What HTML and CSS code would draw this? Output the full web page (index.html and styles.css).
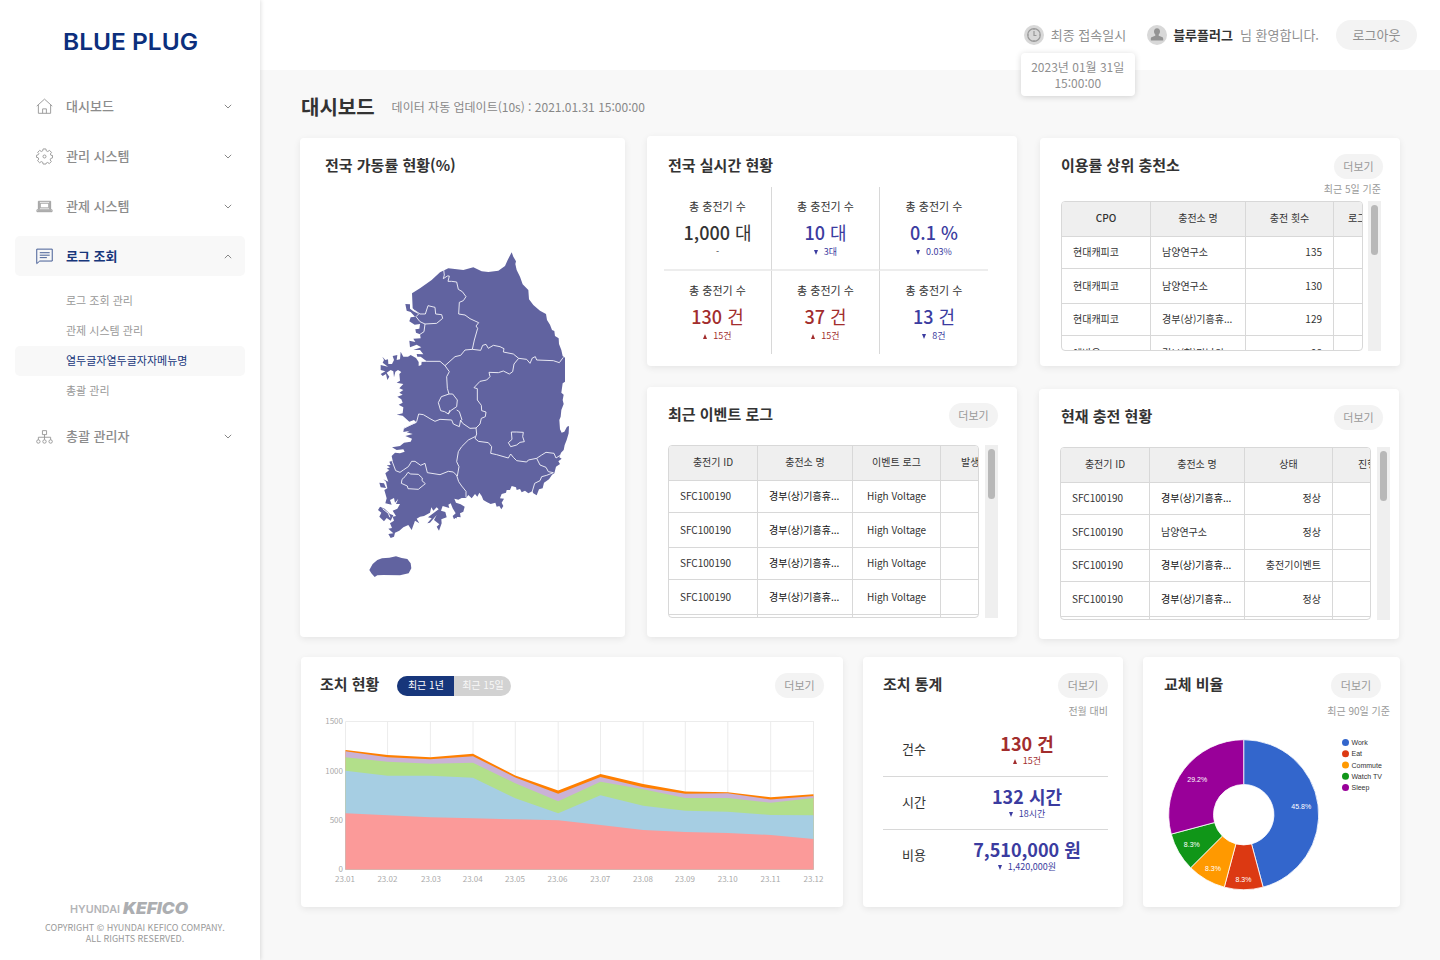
FILE: index.html
```html
<!DOCTYPE html>
<html lang="ko">
<head>
<meta charset="utf-8">
<title>BLUE PLUG 대시보드</title>
<link rel="stylesheet" href="styles.css">
</head>
<body>
<div class="app">
  <aside class="sidebar">
    <svg class="logo" width="136" height="24" viewBox="0 0 136 24"><text class="logo-text" x="0" y="20" textLength="135" lengthAdjust="spacingAndGlyphs">BLUE PLUG</text></svg>
    <nav class="nav">
      <a class="nav-item"><svg class="icon" viewBox="0 0 18 18"><path d="M.8 8.6 9 1.2l8.200 7.400M2.500 7.300v8.900h13V7.300M7 16.200v-4.700h4v4.700"/></svg><span>대시보드</span><svg class="chev" viewBox="0 0 8 5"><path d="M.8.8 4 4 7.200.8"/></svg></a>
      <a class="nav-item"><svg class="icon" viewBox="0 0 18 18"><path d="M7.500 1h3l.4 2 1.600.7 1.800-1.200 2.100 2.100-1.200 1.800.6 1.300 1.700.2v2.600l-1.900.6-.6 1.500 1.200 1.800-2.100 2.100-1.800-1.200-1.500.7L10.500 17h-3l-.4-1.900-1.500-.7-1.800 1.200-2.100-2.100 1.200-1.800-.7-1.500L.5 9.900V7.700L2.300 7.200 3 5.900 1.800 4.600l2.100-2.100 1.700 1.200 1.500-.7z"/><circle cx="9" cy="9" r="1.600"/></svg><span>관리 시스템</span><svg class="chev" viewBox="0 0 8 5"><path d="M.8.8 4 4 7.200.8"/></svg></a>
      <a class="nav-item"><svg class="icon" viewBox="0 0 18 18"><path d="M2.500 12V3.500h13V12M4.500 11V5.500h9V11M5 10.500h8M1 12.500h16v2H1zM2 13.500h14M3.500 4v8m11-8v8"/></svg><span>관제 시스템</span><svg class="chev" viewBox="0 0 8 5"><path d="M.8.8 4 4 7.200.8"/></svg></a>
      <a class="nav-item active"><svg class="icon" viewBox="0 0 18 18"><path d="M.8 16.500V1.200h16.400v12.600H4zM4 5h10.500M4 7.600h10.500M4 10.200h7.500"/></svg><span>로그 조회</span><svg class="chev" viewBox="0 0 8 5"><path d="M.8 4.200 4 1l3.200 3.200"/></svg></a>
      <div class="subnav">
        <a>로그 조회 관리</a><a>관제 시스템 관리</a><a class="current">열두글자열두글자자메뉴명</a><a>총괄 관리</a>
      </div>
      <a class="nav-item"><svg class="icon" viewBox="0 0 18 18"><path d="M6.800 2.800h4.400V7H6.800zM9 7v5.500M2.500 12.500V9.800h13v2.700"/><circle cx="2.500" cy="14.300" r="1.800"/><circle cx="9" cy="14.300" r="1.800"/><circle cx="15.500" cy="14.300" r="1.800"/></svg><span>총괄 관리자</span><svg class="chev" viewBox="0 0 8 5"><path d="M.8.8 4 4 7.200.8"/></svg></a>
    </nav>
    <footer class="foot">
      <svg class="foot-logo" width="120" height="14" viewBox="0 0 120 14"><text class="hyundai" x="0" y="11.500" textLength="50" lengthAdjust="spacingAndGlyphs">HYUNDAI</text><text class="kefico" x="53" y="12.700" textLength="65" lengthAdjust="spacingAndGlyphs">KEFICO</text></svg>
      <p>COPYRIGHT © HYUNDAI KEFICO COMPANY.<br>ALL RIGHTS RESERVED.</p>
    </footer>
  </aside>
  <div class="content">
    <header class="topbar">
      <div class="last-login">
        <svg class="badge" viewBox="0 0 20 20"><circle class="disc" cx="10" cy="10" r="10"/><circle class="ring" cx="10" cy="10" r="6.300"/><path class="ring" d="M10 6v4.500h2.500M10 4v1m0 10v1m-6-6h1m10 0h1"/></svg>
        <span>최종 접속일시</span>
        <div class="tooltip">2023년 01월 31일<br>15:00:00</div>
      </div>
      <div class="user">
        <svg class="badge" viewBox="0 0 20 20"><circle class="disc" cx="10" cy="10" r="10"/><path class="person" d="M10 3.300c2 0 3 1.300 3 3.200 0 1.500-.7 2.400-1.300 3.100v1.200l3.300 1.100c.9.300 1.200 1 1.200 2v1.500H3.800v-1.500c0-1 .3-1.700 1.200-2l3.300-1.100V9.600C7.700 8.900 7 8 7 6.500c0-1.900 1-3.200 3-3.200z"/></svg>
        <b>블루플러그</b><span>님 환영합니다.</span>
      </div>
      <button class="logout">로그아웃</button>
    </header>
    <div class="heading"><h1>대시보드</h1><span>데이터 자동 업데이트(10s) : 2021.01.31 15:00:00</span></div>
    <main>
      <div class="upper">
        <section class="card map-card">
          <h2>전국 가동률 현황(%)</h2>
          <svg class="map" width="250" height="350" viewBox="0 0 750 1050">
            <path class="land" d="M515 37 520 50 528 64 526 72 530 90 540 110 548 133 565 150 567 178 580 195 600 212 618 222 621 240 630 254 636 270 643 273 645 288 656 295 657 312 664 330 668 348 675 353 675 425 668 430 664 458 671 464 668 480 671 492 664 510 662 530 658 540 660 568 665 578 673 575 681 560 687 558 686 580 680 600 674 615 671 630 663 638 658 652 665 656 655 664 660 672 648 680 643 700 636 704 627 718 612 728 608 745 597 748 590 766 580 760 577 754 565 760 555 752 545 757 540 747 530 750 528 742 515 738 510 750 500 750 498 758 485 762 480 775 492 776 485 788 490 798 484 808 478 798 470 800 466 788 452 792 440 786 430 780 425 768 418 758 412 770 405 762 395 775 385 765 378 774 365 774 355 779 343 776 348 788 362 793 374 800 370 815 360 820 362 832 350 830 342 838 338 828 347 820 338 805 332 790 325 794 328 804 308 798 303 812 316 816 320 832 304 838 305 850 297 872 290 860 298 853 282 840 290 825 270 848 262 850 275 835 264 832 280 820 296 808 290 802 280 812 274 802 270 818 252 828 240 830 230 836 238 850 225 842 215 870 205 855 190 862 178 872 165 878 162 890 152 894 145 882 160 880 145 866 156 864 150 850 162 842 158 830 168 828 158 812 172 806 180 792 168 792 175 776 165 788 162 774 150 780 155 794 136 790 140 775 133 750 142 745 138 725 130 718 145 725 136 700 148 690 140 686 150 682 140 676 152 675 148 665 158 662 155 648 165 638 180 640 194 635 190 628 170 630 156 622 180 618 192 608 212 605 216 596 196 588 218 582 200 577 210 572 190 576 192 564 230 548 222 540 208 545 188 527 170 524 188 520 190 502 176 494 188 488 184 478 172 470 188 464 178 458 190 450 178 445 190 432 170 428 180 422 178 402 184 396 174 390 166 395 162 412 160 394 152 390 140 398 148 410 142 420 138 402 128 408 122 402 136 394 122 390 122 375 144 380 128 368 132 360 127 350 136 360 144 358 145 372 156 372 162 360 158 348 172 345 170 360 180 358 182 335 190 350 204 350 212 345 228 354 236 366 236 378 244 375 245 365 260 364 242 350 232 350 230 342 250 343 240 330 220 330 244 322 230 314 210 322 208 302 226 306 220 296 242 295 240 283 228 278 226 268 238 266 240 252 224 254 208 244 212 232 225 230 212 216 200 212 196 192 210 193 210 206 220 214 236 222 218 205 216 160 240 145 275 120 300 97 325 85 370 90 400 82 425 94 445 96 475 92 495 78 503 60ZM118 728 132 730 138 744 122 742ZM120 800 134 806 150 822 160 826 152 842 140 834 132 844 118 830 124 818 114 810ZM342 824 352 818 350 836Z"/>
            <path class="land" d="M88 990 98 972 112 960 126 955 148 953 168 949 185 954 202 957 212 970 214 985 206 1000 180 1006 130 1005 112 1006 104 1011 94 1000Z"/>
            <path class="water" d="M128 806 145 820 150 832M143 808 158 822"/>
            <path class="border" d="M311 89 313 105 310 116 322 108 328 108 324 124 335 124 350 126 355 148 367 155 378 170 370 182 358 187 356 222 375 225 390 236 416 248 408 258 413 265 403 300 397 328 M236 222 228 230 240 245 255 252 290 250 308 235 305 224 287 222 285 202 264 197 256 222 240 222 225 212M255 252 252 275 240 283M241 364 260 364 300 364 315 377 345 350 362 346 375 330 397 328 422 331 428 316 438 313 445 325 460 316 480 320 492 326 490 336 520 342 536 355 560 358 570 370 577 354 586 350 590 360 640 362 658 368 670 352M536 355 522 372 518 395 508 402 490 393 475 398 447 397 450 410 440 420 420 424 402 443 412 446 412 480 424 496 425 512 438 516 436 530 424 535 420 552 408 564 410 582 405 595 415 604 445 608 455 620 452 640 470 644 505 654 512 642 520 652 530 662 560 666 565 660 590 655 605 645 618 637 642 640 648 654 662 645M590 655 600 675 618 682 625 695 640 698M640 698 620 706 605 710 600 722 584 730 576 757M405 590 385 600 365 620 355 635 350 665 357 680 352 708 340 696 325 694 300 704 262 698 255 670 242 676 225 664 215 664 205 680 190 690 180 697 167 692 155 660M350 706 356 725 365 738 378 754 378 772M408 564 390 565 368 550 362 540 358 560 340 552 335 540 300 538 285 544 270 536 250 524 236 522 230 545 190 566M315 377 328 395 320 410 322 445 327 462 304 470 295 488 302 512 314 515 325 522 332 512 350 500 352 480 338 462 327 462M325 522 330 510M350 510 358 515 366 540M514 576 530 576 550 577 548 590 553 605 540 607 530 615 512 620 505 608 516 598ZM204 697 212 702 235 703 247 714 246 722 256 731 235 748 204 746 202 738 184 730 186 718 195 710Z"/>
          </svg>
        </section>
        <div class="col mid">
          <section class="card live">
            <h2>전국 실시간 현황</h2>
            <div class="stats">
              <div class="stat"><label>총 충전기 수</label><strong>1,000 <i>대</i></strong><small>-</small></div>
              <div class="stat down"><label>총 충전기 수</label><strong>10 <i>대</i></strong><small><em></em>3대</small></div>
              <div class="stat down"><label>총 충전기 수</label><strong>0.1 %</strong><small><em></em>0.03%</small></div>
              <div class="stat up"><label>총 충전기 수</label><strong>130 <i>건</i></strong><small><em></em>15건</small></div>
              <div class="stat up"><label>총 충전기 수</label><strong>37 <i>건</i></strong><small><em></em>15건</small></div>
              <div class="stat down"><label>총 충전기 수</label><strong>13 <i>건</i></strong><small><em></em>8건</small></div>
            </div>
          </section>
          <section class="card events">
            <div class="card-head"><h2>최근 이벤트 로그</h2><button class="more">더보기</button></div>
            <div class="table-area">
              <div class="table">
                <div class="tr th"><span>충전기 ID</span><span>충전소 명</span><span>이벤트 로그</span><span class="cut">발생일시</span></div>
                <div class="tr"><span>SFC100190</span><span class="dark">경부(상)기흥휴...</span><span class="ctr">High Voltage</span><span></span></div>
                <div class="tr tall"><span>SFC100190</span><span class="dark">경부(상)기흥휴...</span><span class="ctr">High Voltage</span><span></span></div>
                <div class="tr"><span>SFC100190</span><span class="dark">경부(상)기흥휴...</span><span class="ctr">High Voltage</span><span></span></div>
                <div class="tr tall"><span>SFC100190</span><span class="dark">경부(상)기흥휴...</span><span class="ctr">High Voltage</span><span></span></div>
                <div class="tr"><span></span><span></span><span></span><span></span></div>
              </div>
              <div class="scroll"><i></i></div>
            </div>
          </section>
        </div>
        <div class="col right">
          <section class="card usage">
            <div class="card-head"><h2>이용률 상위 충천소</h2><button class="more">더보기</button></div>
            <p class="note">최근 5일 기준</p>
            <div class="table-area">
              <div class="table">
                <div class="tr th"><span class="med">CPO</span><span>충전소 명</span><span>충전 횟수</span><span class="cut">로그인</span></div>
                <div class="tr"><span>현대캐피코</span><span>남양연구소</span><span class="num">135</span><span></span></div>
                <div class="tr tall"><span>현대캐피코</span><span>남양연구소</span><span class="num">130</span><span></span></div>
                <div class="tr"><span>현대캐피코</span><span>경부(상)기흥휴...</span><span class="num">129</span><span></span></div>
                <div class="tr tall"><span>에바온</span><span>경부(하)망남의...</span><span class="num">98</span><span></span></div>
              </div>
              <div class="scroll"><i></i></div>
            </div>
          </section>
          <section class="card charging">
            <div class="card-head"><h2>현재 충전 현황</h2><button class="more">더보기</button></div>
            <div class="table-area">
              <div class="table">
                <div class="tr th"><span>충전기 ID</span><span>충전소 명</span><span>상태</span><span class="cut">진행률</span></div>
                <div class="tr"><span>SFC100190</span><span class="dark">경부(상)기흥휴...</span><span class="num">정상</span><span></span></div>
                <div class="tr tall"><span>SFC100190</span><span>남양연구소</span><span class="num">정상</span><span></span></div>
                <div class="tr"><span>SFC100190</span><span class="dark">경부(상)기흥휴...</span><span class="num">충전기이벤트</span><span></span></div>
                <div class="tr tall"><span>SFC100190</span><span class="dark">경부(상)기흥휴...</span><span class="num">정상</span><span></span></div>
                <div class="tr"><span></span><span></span><span></span><span></span></div>
              </div>
              <div class="scroll"><i></i></div>
            </div>
          </section>
        </div>
      </div>
      <div class="lower">
        <section class="card action">
          <div class="card-head"><h2>조치 현황</h2><div class="toggle"><span class="on">최근 1년</span><span>최근 15일</span></div><button class="more">더보기</button></div>
          <svg class="chart" width="542" height="190" viewBox="301 707 542 190">
            <path class="grid" d="M345.500 721.500H814M345.500 771H814M345.500 820H814M345.500 721.500V869.500M387.600 721.500V869.500M430.400 721.500V869.500M473 721.500V869.500M515.300 721.500V869.500M558.200 721.500V869.500M600.500 721.500V869.500M643.200 721.500V869.500M685.300 721.500V869.500M727.800 721.500V869.500M770.700 721.500V869.500M813.500 721.500V869.500"/>
            <path fill="#ff7f00" d="M345.500 750 387.600 755 430.400 757.300 473 753.800 515.300 775.500 558.200 790.500 600.500 774 643.200 784 685.300 791.500 727.800 792.300 770.700 797.300 813.500 794.300V869.500H345.500Z"/>
            <path fill="#cab2d6" d="M345.500 751.300 387.600 757.200 430.400 759.200 473 756.200 515.300 777.500 558.200 793.700 600.500 777 643.200 787.300 685.300 793.700 727.800 793.300 770.700 799.500 813.500 796V869.500H345.500Z"/>
            <path fill="#b2df8a" d="M345.500 757.300 387.600 761.700 430.400 763.700 473 762.700 515.300 783.300 558.200 801.300 600.500 781.700 643.200 789.300 685.300 798 727.800 798 770.700 802.700 813.500 798V869.500H345.500Z"/>
            <path fill="#a6cee3" d="M345.500 770.700 387.600 775.700 430.400 775.700 473 777.700 515.300 798.300 558.200 813.300 600.500 795.300 643.200 805.700 685.300 810.700 727.800 811.700 770.700 815 813.500 815.300V869.500H345.500Z"/>
            <path fill="#fb9a99" d="M345.500 813.300 387.600 815.300 430.400 817.300 473 818.300 515.300 819.300 558.200 820.300 600.500 825 643.200 830 685.300 832 727.800 833 770.700 835 813.500 839V869.500H345.500Z"/>
            <g class="ylab"><text x="343" y="724">1500</text><text x="343" y="773.500">1000</text><text x="343" y="822.500">500</text><text x="343" y="872">0</text></g>
            <g class="xlab"><text x="345" y="882">23.01</text><text x="387.400" y="882">23.02</text><text x="431" y="882">23.03</text><text x="472.700" y="882">23.04</text><text x="515" y="882">23.05</text><text x="557.500" y="882">23.06</text><text x="600.300" y="882">23.07</text><text x="643" y="882">23.08</text><text x="685" y="882">23.09</text><text x="727.700" y="882">23.10</text><text x="770.500" y="882">23.11</text><text x="813.500" y="882">23.12</text></g>
          </svg>
        </section>
        <section class="card totals">
          <div class="card-head"><h2>조치 통계</h2><button class="more">더보기</button></div>
          <p class="note">전월 대비</p>
          <div class="total up"><span>건수</span><div><strong>130 건</strong><small><em></em>15건</small></div></div>
          <div class="total down"><span>시간</span><div><strong>132 시간</strong><small><em></em>18시간</small></div></div>
          <div class="total down"><span>비용</span><div><strong>7,510,000 원</strong><small><em></em>1,420,000원</small></div></div>
        </section>
        <section class="card ratio">
          <div class="card-head"><h2>교체 비율</h2><button class="more">더보기</button></div>
          <p class="note">최근 90일 기준</p>
          <svg class="donut" width="257" height="170" viewBox="1143 727 257 170">
            <g stroke="#fff" stroke-width=".8">
            <path fill="#3366cc" d="M1243.700 739.700A75 75 0 0 1 1263.110 887.140L1251.520 843.880A30.200 30.200 0 0 0 1243.700 784.500Z"/>
            <path fill="#dc3912" d="M1263.110 887.140A75 75 0 0 1 1224.290 887.140L1235.880 843.880A30.200 30.200 0 0 0 1251.520 843.880Z"/>
            <path fill="#ff9900" d="M1224.290 887.140A75 75 0 0 1 1190.670 867.730L1222.350 836.050A30.200 30.200 0 0 0 1235.880 843.880Z"/>
            <path fill="#109618" d="M1190.670 867.730A75 75 0 0 1 1171.260 834.110L1214.530 822.520A30.200 30.200 0 0 0 1222.350 836.050Z"/>
            <path fill="#990099" d="M1171.260 834.110A75 75 0 0 1 1243.700 739.700L1243.700 784.500A30.200 30.200 0 0 0 1214.530 822.520Z"/>
            </g>
            <g class="pct"><text x="1301.200" y="809.300">45.8%</text><text x="1197.200" y="781.600">29.2%</text><text x="1191.800" y="847">8.3%</text><text x="1213" y="870.500">8.3%</text><text x="1243.500" y="881.800">8.3%</text></g>
            <circle cx="1345.500" cy="742.500" r="3.500" fill="#3366cc"/><circle cx="1345.500" cy="753.800" r="3.500" fill="#dc3912"/><circle cx="1345.500" cy="765" r="3.500" fill="#ff9900"/><circle cx="1345.500" cy="776.200" r="3.500" fill="#109618"/><circle cx="1345.500" cy="787.500" r="3.500" fill="#990099"/>
            <g class="legend"><text x="1351.500" y="745">Work</text><text x="1351.500" y="756.200">Eat</text><text x="1351.500" y="767.500">Commute</text><text x="1351.500" y="778.700">Watch TV</text><text x="1351.500" y="790">Sleep</text></g>
          </svg>
        </section>
      </div>
    </main>
  </div>
</div>
</body>
</html>
```
FILE: styles.css
```css
* { box-sizing: border-box; }
body { margin: 0; font-family: "Noto Sans CJK KR", sans-serif; background: #f8f8f8; color: #333; }
h1, h2, p { margin: 0; }
button { border: 0; padding: 0; font-family: inherit; cursor: pointer; }
.app { display: flex; width: 1440px; height: 960px; overflow: hidden; }

/* Sidebar */
.sidebar { position: relative; z-index: 1; width: 260px; flex: none; display: flex; flex-direction: column; background: #fff; box-shadow: 1px 0 4px rgba(0,0,0,.12); }
.logo { margin: 30px 0 0 63px; display: block; }
.logo-text { font: 600 23px Inter, sans-serif; fill: #0c2f7d; }
.nav { margin-top: 32px; padding: 0 15px; display: flex; flex-direction: column; gap: 10px; }
.nav-item { display: flex; align-items: center; height: 40px; padding: 0 13px 0 21px; border-radius: 5px; font-size: 13px; font-weight: 500; line-height: 40px; color: #8c8c8c; }
.nav-item span { flex: 1; margin-left: 13px; }
.icon { width: 17px; height: 17px; fill: none; stroke: #999; stroke-width: 1; }
.chev { width: 8px; height: 5px; fill: none; stroke: #888; stroke-width: 1; }
.active { background: #f8f8f8; color: #17367b; font-weight: 700; }
.active .icon { stroke: #3b5590; }
.subnav { display: flex; flex-direction: column; }
.subnav a { height: 30px; padding-left: 51px; border-radius: 5px; font-size: 11px; line-height: 29px; color: #999; }
.subnav .current { background: #f8f8f8; color: #17367b; }
.foot { margin-top: auto; padding: 0 0 16px 10px; text-align: center; font-size: 9px; line-height: 11px; color: #999; }
.foot-logo { display: block; margin: 0 auto 7px 60px; }
.hyundai { font: 600 11px Inter, sans-serif; fill: #b3b4b7; }
.kefico { font: italic 900 16px Inter, sans-serif; fill: #acaeb1; }

/* Top bar */
.content { flex: 1; }
.topbar { height: 70px; padding: 0 23px; display: flex; align-items: center; justify-content: flex-end; background: #fff; font-size: 13px; line-height: 20px; color: #8f8f8f; }
.last-login { position: relative; display: flex; align-items: center; gap: 7px; margin-right: 21px; }
.badge { width: 20px; height: 20px; }
.disc { fill: #d8d8d8; }
.ring { fill: none; stroke: #999; stroke-width: 1.2; }
.person { fill: #939393; }
.tooltip { position: absolute; left: -3px; top: 28px; width: 114px; height: 43px; padding-top: 6px; border-radius: 4px; background: #fff; box-shadow: 0 1px 6px rgba(0,0,0,.16); text-align: center; font-size: 12px; line-height: 15.500px; white-space: nowrap; }
.user { display: flex; align-items: center; }
.user b { margin: 0 7px 0 6px; color: #333; }
.logout { width: 81px; height: 30px; margin-left: 17px; border-radius: 15px; background: #f3f3f3; font-size: 13px; line-height: 28px; color: #8f8f8f; }
.heading { display: flex; align-items: center; gap: 17px; height: 30px; margin: 22px 0 0 41px; }
h1 { font-size: 20px; line-height: 30px; }
.heading span { font-size: 12px; line-height: 30px; color: #888; }

/* Cards */
main { padding: 14px 40px 0; }
.upper { display: flex; align-items: flex-start; height: 521px; }
.lower { display: flex; gap: 20px; padding-left: 1px; }
.card { background: #fff; border-radius: 4px; box-shadow: 0 2px 7px rgba(0,0,0,.08); }
h2 { font-size: 15px; line-height: 22px; font-weight: 700; white-space: nowrap; }
.card-head { display: flex; align-items: flex-start; height: 25px; }
.card-head h2 { flex: 1; }
.more { width: 49px; height: 25px; border-radius: 13px; background: #f3f3f3; font-size: 11px; line-height: 23px; color: #999; }
.note { text-align: right; font-size: 10px; line-height: 14px; color: #999; }
.map-card { width: 325px; height: 499px; margin-top: 2px; padding: 16px 25px; }
.map { display: block; margin: 64px 0 0 15px; }
.land { fill: #6163a0; }
.border { fill: none; stroke: #f0f0f8; stroke-width: 2.800; stroke-linejoin: round; }
.water { fill: none; stroke: #fff; stroke-width: 3; }
.col { display: flex; flex-direction: column; }
.mid { width: 370px; margin-left: 22px; gap: 21px; }
.right { width: 361px; margin: 2px 0 0 22px; gap: 23px; }
.live { height: 230px; padding: 18px 0 0 17px; }
.live h2 { margin-left: 4px; }
.stats { display: grid; grid-template-columns: repeat(3, 108px); grid-template-rows: 84px 83px; margin-top: 11px; }
.stat { display: flex; flex-direction: column; align-items: center; border-right: 1px solid #d8d8d8; }
.stat:nth-child(3n) { border-right: 0; }
.stat:nth-child(-n+3) { border-bottom: 2px solid #ededed; }
.stat label { margin-top: 11px; font-size: 11px; line-height: 16px; }
.stat strong { margin-top: 5px; font-size: 18px; line-height: 26px; font-weight: 500; }
.stat i { font-style: normal; font-weight: 400; }
small { display: flex; align-items: center; gap: 5px; font-size: 9px; line-height: 14px; }
.up strong, .up small { color: #a22d2d; }
.down strong, .down small { color: #3b3ca0; }
em { width: 0; height: 0; border: 2.500px solid transparent; margin-right: 1px; }
.up em { border-top: 0; border-bottom: 5px solid #a22d2d; }
.down em { border-bottom: 0; border-top: 5px solid #3b3ca0; }
.events { height: 250px; padding: 16px 19px 0 21px; }
.usage { width: 360px; height: 228px; margin-left: 1px; padding: 16px 17px 0 21px; }
.usage .note { margin: 3px 2px 5px 0; }
.charging { width: 360px; height: 250px; padding: 16px 9px 0 21px; }
.charging .more { margin-right: 7px; }
.charging h2 { margin-left: 1px; }

/* Tables */
.table-area { display: flex; justify-content: space-between; height: 173px; }
.events .table-area, .charging .table-area { margin-top: 17px; }
.usage .table-area { height: 150px; padding-right: 2px; }
.table { width: 311px; border: 1px solid #d8d8d8; border-radius: 4px; overflow: hidden; font-size: 10px; }
.usage .table { width: 302px; }
.tr { display: grid; grid-template-columns: 89px 95px 88px 90px; height: 32px; line-height: 30px; border-bottom: 1px solid #d8d8d8; }
.tall { height: 35px; line-height: 33px; }
.th { height: 35px; line-height: 31px; background: #efefef; text-align: center; }
.tr span { padding: 0 11px; border-right: 1px solid #d8d8d8; white-space: nowrap; }
.tr .num { text-align: right; }
.tr .ctr { text-align: center; }
.tr .dark { color: #111; }
.tr .med { font-weight: 500; }
.tr .cut { text-align: left; padding-left: 14px; }
.events .cut { padding-left: 20px; }
.charging .cut { padding-left: 25px; }
.scroll { width: 13px; padding: 4px 3px; background: #efefef; }
.scroll i { display: block; width: 7px; height: 50px; border-radius: 4px; background: #b8b8b8; }

/* Lower cards */
.action { width: 542px; height: 250px; }
.action .card-head { padding: 16px 19px 0 19px; height: 41px; }
.action .card-head h2 { flex: none; }
.toggle { display: flex; width: 114px; height: 20px; margin: 3px auto 0 18px; border-radius: 10px; overflow: hidden; background: #d2d2d2; font-size: 10px; line-height: 18px; text-align: center; color: #f8f8f8; }
.toggle span { width: 57px; }
.toggle .on { background: #17367b; color: #fff; }
.chart { display: block; margin-top: 9px; }
.grid { fill: none; stroke: #ececec; }
.ylab, .xlab { font-size: 8px; fill: #aaa; }
.ylab { text-anchor: end; }
.xlab { text-anchor: middle; }
.totals { width: 260px; height: 250px; padding: 16px 15px 0 20px; }
.totals .more, .ratio .more { width: 50px; }
.totals .note { margin: 6px 0 6px; }
.total { display: flex; height: 53px; padding-left: 19px; border-bottom: 1px solid #d8d8d8; font-size: 13px; line-height: 50px; }
.total:last-child { border-bottom: 0; }
.total > span { width: 44px; }
.total > div { width: 162px; display: flex; flex-direction: column; align-items: center; }
.total strong { margin-top: 7px; font-size: 18px; line-height: 24px; }
.total small { line-height: 12px; }
.ratio { width: 257px; height: 250px; }
.ratio .card-head { margin: 16px 19px 0 21px; }
.ratio .note { margin: 6px 10px 0 0; }
.donut { display: block; margin-top: 9px; }
.pct { font: 7px "Liberation Sans", sans-serif; fill: #fff; text-anchor: middle; }
.legend { font: 7px "Liberation Sans", sans-serif; fill: #333; }
```
